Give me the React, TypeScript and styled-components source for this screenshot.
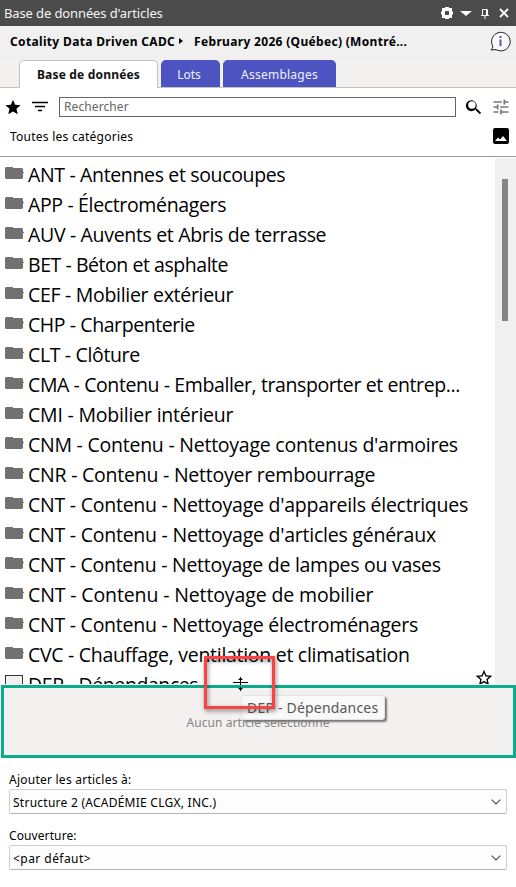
import React, { ReactNode } from "react";
import styled, { createGlobalStyle } from "styled-components";

const Global = createGlobalStyle`
  * { box-sizing: border-box; }
  body { margin: 0; background: #fff; font-family: "Noto Sans", "Open Sans", sans-serif; color: #000; }
`;

const Panel = styled.main`
  position: relative;
  display: flex;
  flex-direction: column;
  width: 516px;
  height: 887px;
  overflow: hidden;
  background: #fff;
`;

const TitleBar = styled.header`
  display: flex;
  align-items: center;
  justify-content: space-between;
  height: 26px;
  flex: none;
  padding: 0 6px 0 4px;
  background: #4b4b4b;
  color: #f4f4f4;
`;

const TitleIcons = styled.div`
  display: flex;
  align-items: center;
  gap: 7px;
`;

const Label = styled.span<{ $size?: number; $spacing?: number; $bold?: boolean; $color?: string }>`
  white-space: pre;
  font-size: ${(p) => p.$size ?? 12}px;
  font-weight: ${(p) => (p.$bold ? 700 : 400)};
  letter-spacing: ${(p) => p.$spacing ?? 0}px;
  color: ${(p) => p.$color ?? "inherit"};
`;

const ItemLabel = styled(Label)`
  font-family: "Open Sans", "Noto Sans", sans-serif;
  font-size: 19.5px;
  line-height: 28px;
  padding-bottom: 1px;
`;

const Breadcrumb = styled.nav`
  display: flex;
  align-items: center;
  height: 34px;
  flex: none;
  padding: 0 5px 4px 10px;
  background: #f0f0f0;

  svg:last-child { margin: 0 0 0 auto; }
`;

const CrumbArrow = styled.svg`
  margin: 0 11px 0 4px;
  flex: none;
`;

const Tabs = styled.div`
  display: flex;
  gap: 3px;
  height: 28px;
  flex: none;
  padding-left: 19px;
  background: #f3f1f0;
  box-shadow: inset 0 -1px #c4c2c1;
`;

const Tab = styled.button<{ $active?: boolean; $width: number }>`
  width: ${(p) => p.$width}px;
  height: ${(p) => (p.$active ? 28 : 27)}px;
  padding: 0 0 1px;
  border: 1px solid ${(p) => (p.$active ? "#c4c2c1" : "#4d53c1")};
  border-bottom: 0;
  border-radius: 5px 5px 0 0;
  background: ${(p) => (p.$active ? "#fff" : "#4d53c1")};
  color: ${(p) => (p.$active ? "#111" : "#f0f0fb")};
  font-family: inherit;
`;

const SearchRow = styled.div`
  display: flex;
  align-items: center;
  height: 37px;
  flex: none;
  padding: 0 5px;
`;

const FilterIcon = styled.svg`
  margin-left: 11px;
`;

const SearchField = styled.div`
  display: flex;
  align-items: center;
  width: 397px;
  height: 20px;
  margin: 0 8px 0 11px;
  padding: 0 4px 1px;
  border: 1px solid #646464;
`;

const Spacer = styled.span`
  flex: 1;
`;

const CategoryRow = styled.div`
  display: flex;
  align-items: center;
  justify-content: space-between;
  height: 32px;
  flex: none;
  padding: 0 7px 9px 10px;
  border-bottom: 1px solid #9b9b9b;
`;

const ListArea = styled.section`
  display: flex;
  height: 528px;
  flex: none;
  padding-top: 1px;
`;

const List = styled.ul`
  flex: 1;
  min-width: 0;
  height: 526px;
  margin: 0;
  padding: 2px 0 0 5px;
  list-style: none;
  overflow: hidden;
`;

const Item = styled.li`
  display: flex;
  align-items: center;
  height: 30px;

  > svg { flex: none; margin: -4px 4px 0 0; }
`;

const PageIcon = styled.span`
  width: 18px;
  height: 16px;
  margin: -5px 5px 0 0;
  border: 1px solid #333;
  background: #f0f0f2;
`;

const StarSlot = styled.span`
  display: flex;
  margin: -14px 1px 0 auto;
`;

const ScrollTrack = styled.div`
  width: 21px;
  padding: 21px 0 0 7px;
  background: #f0f0f0;
`;

const ScrollThumb = styled.div`
  width: 6px;
  height: 142px;
  background: #858585;
`;

const EmptyPane = styled.section`
  display: flex;
  align-items: center;
  justify-content: center;
  height: 73px;
  flex: none;
  margin-left: 1px;
  padding: 1px 1px 0 0;
  border: 3px solid #0bac8a;
  background: #f3f1f0;
`;

const Form = styled.form`
  display: flex;
  flex-direction: column;
  gap: 13px;
  padding: 13px 9px 0;
`;

const Field = styled.label`
  display: flex;
  flex-direction: column;
  height: 43px;
  > span { height: 18px; line-height: 17px; }
`;

const SelectBox = styled.div`
  display: flex;
  align-items: center;
  justify-content: space-between;
  height: 25px;
  flex: none;
  padding: 1px 5px 0 3px;
  border: 1px solid #cfcfcf;
  border-bottom-color: #b5b5b5;
  border-radius: 2px;
  background: #fdfdfd;
`;

const Tooltip = styled.div`
  position: absolute;
  left: 241px;
  top: 695px;
  display: flex;
  align-items: center;
  width: 144px;
  height: 25px;
  padding: 0 5px;
  border: 1px solid #e2e3e5;
  border-radius: 3px;
  background: #f9f9f9;
  box-shadow: 2px 2px 2px #777;
`;

const Highlight = styled.div`
  position: absolute;
  left: 204px;
  top: 656px;
  width: 71px;
  height: 53px;
  border: 3px solid #fc4343;
  filter: drop-shadow(1px 2px 2px rgba(0, 0, 0, 0.5));
`;

const Cursor = styled.svg`
  position: absolute;
  left: 233px;
  top: 677px;
`;

const Folder = () => (
  <svg width="19" height="12" viewBox="0 0 19 12">
    <path d="M1 0h7v1h9l1 1v3h1v1h-1v5l-1 1H1l-1-1V1z" fill="#717171" />
  </svg>
);

const Chevron = () => (
  <svg width="10" height="6" viewBox="0 0 10 6">
    <path d="M.7.7 5 5 9.3.7" fill="none" stroke="#4a4a4a" strokeWidth="1.1" />
  </svg>
);

const Material = ({ size, fill = "#000", children }: { size: number; fill?: string; children: ReactNode }) => (
  <svg width={size} height={size} viewBox="0 0 24 24" fill={fill}>{children}</svg>
);

// Category name and its letter spacing in pixels.
const items: [string, number][] = [
  ["ANT - Antennes et soucoupes", -0.35],
  ["APP - Électroménagers", -0.35],
  ["AUV - Auvents et Abris de terrasse", -0.33],
  ["BET - Béton et asphalte", -0.45],
  ["CEF - Mobilier extérieur", -0.3],
  ["CHP - Charpenterie", -0.42],
  ["CLT - Clôture", -0.35],
  ["CMA - Contenu - Emballer, transporter et entrep...", -0.4],
  ["CMI - Mobilier intérieur", -0.2],
  ["CNM - Contenu - Nettoyage contenus d'armoires", -0.24],
  ["CNR - Contenu - Nettoyer rembourrage", -0.23],
  ["CNT - Contenu - Nettoyage d'appareils électriques", -0.24],
  ["CNT - Contenu - Nettoyage d'articles généraux", -0.24],
  ["CNT - Contenu - Nettoyage de lampes ou vases", -0.27],
  ["CNT - Contenu - Nettoyage de mobilier", -0.13],
  ["CNT - Contenu - Nettoyage électroménagers", -0.25],
  ["CVC - Chauffage, ventilation et climatisation", -0.29],
];

export default function App() {
  return (
    <Panel>
      <Global />
      <TitleBar>
        <Label $size={13} $spacing={-0.12}>Base de données d'articles</Label>
        <TitleIcons>
          <svg width="12" height="12" viewBox="0 0 12 12">
            <path fillRule="evenodd" fill="#fff" d="M4 0h4v1h3v3l1 1v2l-1 1v3H8v1H4v-1H1V8L0 7V5l1-1V1h3zM4 4v4h4V4z" />
          </svg>
          <svg width="12" height="12" viewBox="0 0 12 12"><path d="M0 4h12L6 9z" fill="#fff" /></svg>
          <svg width="12" height="12" viewBox="0 0 12 12">
            <path d="M3.500 8V2.500h5V8M2 8.500h8M6 9v3M7.500 3v5" stroke="#fff" fill="none" />
          </svg>
          <svg width="12" height="12" viewBox="0 0 12 12"><path d="m2 2 8 8m0-8-8 8" stroke="#fff" strokeWidth="1.800" /></svg>
        </TitleIcons>
      </TitleBar>
      <Breadcrumb>
        <Label $bold $spacing={0.34}>Cotality Data Driven CADC</Label>
        <CrumbArrow width="4" height="8" viewBox="0 0 4 8"><path d="m0 1 4 3-4 3z" /></CrumbArrow>
        <Label $bold $spacing={0.32}>February 2026 (Québec) (Montré...</Label>
        <svg width="21" height="21" viewBox="0 0 21 21" fill="none" stroke="#222">
          <path d="M3 15.500A9.300 9.300 0 1 1 6 18.500L1 19l1-1.500z" fill="#fafafa" />
          <path d="M10.500 5v2m0 1.500V15" stroke="#4d5cb8" strokeWidth="2" />
        </svg>
      </Breadcrumb>
      <Tabs>
        <Tab $active $width={139}><Label $bold $spacing={0.18}>Base de données</Label></Tab>
        <Tab $width={59}><Label>Lots </Label></Tab>
        <Tab $width={113}><Label $spacing={0.25}>Assemblages</Label></Tab>
      </Tabs>
      <SearchRow>
        <Material size={16}><path d="m12 1 3.200 7.500 8.300.8-6.300 5.500 1.900 8.200L12 18.800 4.900 23l1.900-8.200L.5 9.300l8.300-.8z" /></Material>
        <FilterIcon width="16" height="11" viewBox="0 0 16 11"><path d="M0 1.500h16M3 5.500h10M6 9.500h4" stroke="#000" strokeWidth="1.600" /></FilterIcon>
        <SearchField><Label $color="#666" $spacing={0.1}>Rechercher</Label></SearchField>
        <Material size={20}><path d="M15.500 14h-.79l-.28-.27A6.500 6.500 0 1 0 13.730 14.710l.27.28v.79l5 4.990L20.490 19zM9.500 14a4.500 4.500 0 1 1 0-9 4.500 4.500 0 0 1 0 9z" /></Material>
        <Spacer />
        <Material size={20} fill="#777"><path d="M3 17v2h6v-2zM3 5v2h10V5zm10 16v-2h8v-2h-8v-2h-2v6zM7 9v2H3v2h4v2h2V9zm14 4v-2H11v2zm-6-4h2V7h4V5h-4V3h-2z" /></Material>
      </SearchRow>
      <CategoryRow>
        <Label $spacing={0.25}>Toutes les catégories</Label>
        <svg width="16" height="16" viewBox="0 0 16 16"><rect width="16" height="16" rx="2" /><path d="m2 13 3-3.500 2 2L10 8l4 5z" fill="#fff" /></svg>
      </CategoryRow>
      <ListArea>
        <List>
          {items.map(([t, s]) => (
            <Item key={t}><Folder /><ItemLabel $spacing={s}>{t}</ItemLabel></Item>
          ))}
          <Item>
            <PageIcon /><ItemLabel $spacing={-0.42}>DEP - Dépendances</ItemLabel>
            <StarSlot><Material size={20}><path d="m22 9.240-7.190-.62L12 2 9.190 8.630 2 9.240l5.460 4.730L5.820 21 12 17.270 18.180 21l-1.630-7.030zM12 15.400l-3.760 2.270 1-4.280-3.320-2.880 4.380-.38L12 6.100l1.710 4.040 4.380.38-3.320 2.880 1 4.280z" /></Material></StarSlot>
          </Item>
        </List>
        <ScrollTrack><ScrollThumb /></ScrollTrack>
      </ListArea>
      <EmptyPane><Label $color="#858585" $spacing={0.08}>Aucun article sélectionné</Label></EmptyPane>
      <Form>
        <Field><Label $spacing={0.24}>Ajouter les articles à:</Label><SelectBox><Label $spacing={0.25}>Structure 2 (ACADÉMIE CLGX, INC.)</Label><Chevron /></SelectBox></Field>
        <Field><Label $spacing={0.1}>Couverture:</Label><SelectBox><Label $spacing={0.45}>&lt;par défaut&gt;</Label><Chevron /></SelectBox></Field>
      </Form>
      <Tooltip><Label $size={14} $spacing={0.2} $color="#575757">DEP - Dépendances</Label></Tooltip>
      <Highlight />
      <Cursor width="16" height="15" viewBox="0 0 16 15">
        <path d="M0 5.500h15M7.500 0v8M6.500 1.500h2M5.500 2.500h4M7.500 10v4M5.500 11.500h4M6.500 12.500h2" stroke="#000" />
      </Cursor>
    </Panel>
  );
}
